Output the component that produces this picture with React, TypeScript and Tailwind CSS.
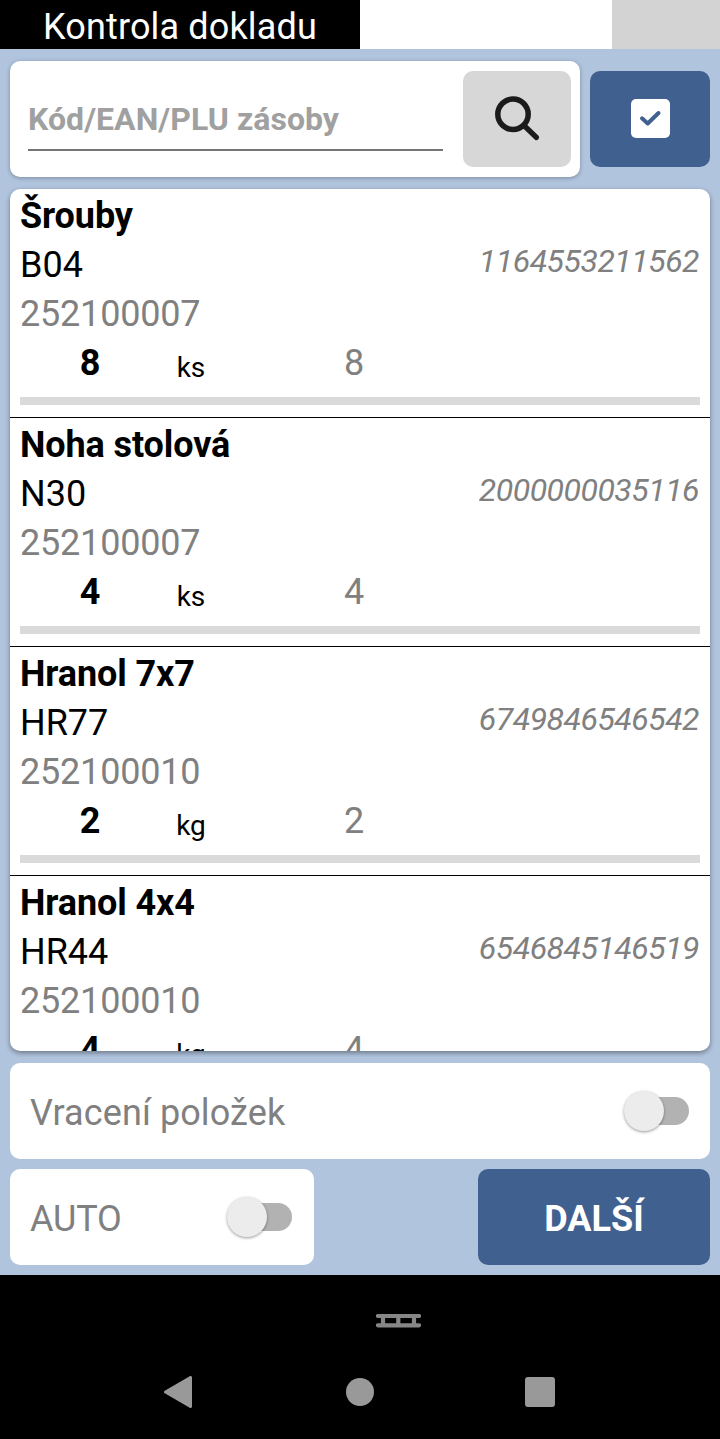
import { useState } from "react"

interface StockItem {
  name: string
  code: string
  document: string
  ean: string
  quantity: number
  unit: string
  expected: number
}

const items: StockItem[] = [
  { name: "Šrouby", code: "B04", document: "252100007", ean: "1164553211562", quantity: 8, unit: "ks", expected: 8 },
  { name: "Noha stolová", code: "N30", document: "252100007", ean: "2000000035116", quantity: 4, unit: "ks", expected: 4 },
  { name: "Hranol 7x7", code: "HR77", document: "252100010", ean: "6749846546542", quantity: 2, unit: "kg", expected: 2 },
  { name: "Hranol 4x4", code: "HR44", document: "252100010", ean: "6546845146519", quantity: 4, unit: "kg", expected: 4 },
]

function Toggle({ checked, onChange, label }: { checked: boolean; onChange: (value: boolean) => void; label: string }) {
  return (
    <button
      role="switch"
      aria-checked={checked}
      aria-label={label}
      onClick={() => onChange(!checked)}
      className={`flex h-7 w-[62px] items-center rounded-full bg-[#b2b2b2] ${checked ? "justify-end" : "justify-start"}`}
    >
      <span className="-ml-[3px] size-10 shrink-0 rounded-full bg-[#ececec] shadow-[0_1px_3px_rgba(0,0,0,0.4)]" />
    </button>
  )
}

function ItemRow({ item }: { item: StockItem }) {
  return (
    <li className="h-[229px] shrink-0 border-b border-black px-2.5 pt-[3px] text-[36px] leading-[49px]">
      <p className="font-bold tracking-[-0.1px]">{item.name}</p>
      <div className="flex justify-between">
        <p>{item.code}</p>
        <p className="pr-px text-[32px] leading-[40px] tracking-[-0.5px] text-[#808080] italic">{item.ean}</p>
      </div>
      <p className="tracking-[-0.2px] text-[#808080]">{item.document}</p>
      <div className="flex text-center">
        <p className="w-[140px] font-bold">{item.quantity}</p>
        <p className="w-[62px] pt-1 text-[28px]/[49px]">{item.unit}</p>
        <p className="w-[264px] text-[#808080]">{item.expected}</p>
      </div>
      <div className="-mt-[5px] pt-2.5">
        <div className="h-2 bg-[#dadada]" />
      </div>
    </li>
  )
}

export default function App() {
  const [query, setQuery] = useState("")
  const [returning, setReturning] = useState(false)
  const [auto, setAuto] = useState(false)

  return (
    <div className="flex h-[1439px] w-[720px] flex-col overflow-hidden bg-[#b0c4de] font-[Roboto,sans-serif] text-black">
      <header className="flex h-[49px] shrink-0">
        <h1 className="w-[360px] bg-black pt-[3px] text-center text-[36px] leading-[49px] tracking-[0.15px] text-white">
          Kontrola dokladu
        </h1>
        <div className="w-[252px] bg-white" />
        <div className="flex-1 bg-[#d3d3d3]" />
      </header>

      <main className="flex min-h-0 flex-1 flex-col px-2.5 pt-3 pb-2.5">
        <div className="flex shrink-0 items-start gap-2.5">
          <div className="flex h-[116px] w-[570px] justify-between rounded-[10px] bg-white pt-2.5 pr-[9px] pl-[18px] shadow-[0_1px_4px_rgba(0,0,0,0.3)]">
            <input
              value={query}
              onChange={(e) => setQuery(e.target.value)}
              placeholder="Kód/EAN/PLU zásoby"
              className="h-20 w-[415px] border-b-2 border-[#757575] pt-[18px] text-[32px] font-bold tracking-[0.05px] outline-none placeholder:text-[#a0a0a0]"
            />
            <button aria-label="Hledat" className="flex h-24 w-[108px] items-center justify-center rounded-[10px] bg-[#d7d7d7]">
              <svg width="48" height="48" viewBox="0 0 48 48" fill="none" stroke="#1b1b1b" strokeLinecap="round">
                <circle cx="20" cy="19.3" r="15.2" strokeWidth="5.5" />
                <path d="M31 30.5L43.5 42.5" strokeWidth="5.2" />
              </svg>
            </button>
          </div>
          <button aria-label="Potvrdit" className="mt-2.5 flex h-24 flex-1 items-center justify-center rounded-[10px] bg-[#40608f]">
            <svg width="40" height="40" viewBox="0 0 40 40" fill="none">
              <rect x="1" y="0" width="39" height="39" rx="5" fill="#fff" />
              <path d="M12 19.3L17.7 24.5L28.5 14" stroke="#40608f" strokeWidth="4" strokeLinecap="round" strokeLinejoin="round" />
            </svg>
          </button>
        </div>

        <ul className="mt-3 flex h-[862px] shrink-0 flex-col overflow-hidden rounded-[10px] bg-white shadow-[0_2px_5px_rgba(0,0,0,0.4)]">
          {items.map((item) => (
            <ItemRow key={item.code} item={item} />
          ))}
        </ul>

        <div className="mt-3 flex h-24 shrink-0 items-center justify-between rounded-[10px] bg-white pr-[21px] pl-5">
          <span className="pt-1 text-[36px] tracking-[0.1px] text-[#808080]">Vracení položek</span>
          <Toggle checked={returning} onChange={setReturning} label="Vracení položek" />
        </div>

        <div className="mt-2.5 flex h-24 shrink-0 justify-between">
          <div className="flex w-[304px] items-center justify-between rounded-[10px] bg-white pr-[22px] pl-5">
            <span className="pt-1 text-[36px] tracking-[-0.2px] text-[#808080]">AUTO</span>
            <Toggle checked={auto} onChange={setAuto} label="AUTO" />
          </div>
          <button className="w-[232px] rounded-[10px] bg-[#40608f] pt-1 text-[36px] font-bold text-white">DALŠÍ</button>
        </div>
      </main>

      <footer className="flex h-[164px] shrink-0 flex-col bg-black">
        <div className="flex h-[69px] justify-center pt-[39px] pl-[77px]">
          <svg width="45" height="14" viewBox="0 0 45 14" stroke="#868686" fill="none">
            <path d="M2 2H43M2 11.3H43" strokeWidth="4.2" strokeLinecap="round" />
            <path d="M7 2V11M22.3 2V11M38 2V11" strokeWidth="4.2" />
          </svg>
        </div>
        <nav className="flex h-24 items-center pt-0.5 pl-[164px]">
          <svg width="28" height="32" viewBox="0 0 28 32" fill="#999" stroke="#999" strokeWidth="3" strokeLinejoin="round">
            <path d="M26.5 1.5V30.5L1.5 16Z" />
          </svg>
          <span className="ml-[154px] size-7 rounded-full bg-[#999999]" />
          <span className="ml-[151px] size-[30px] rounded-[3px] bg-[#999999]" />
        </nav>
      </footer>
    </div>
  )
}
